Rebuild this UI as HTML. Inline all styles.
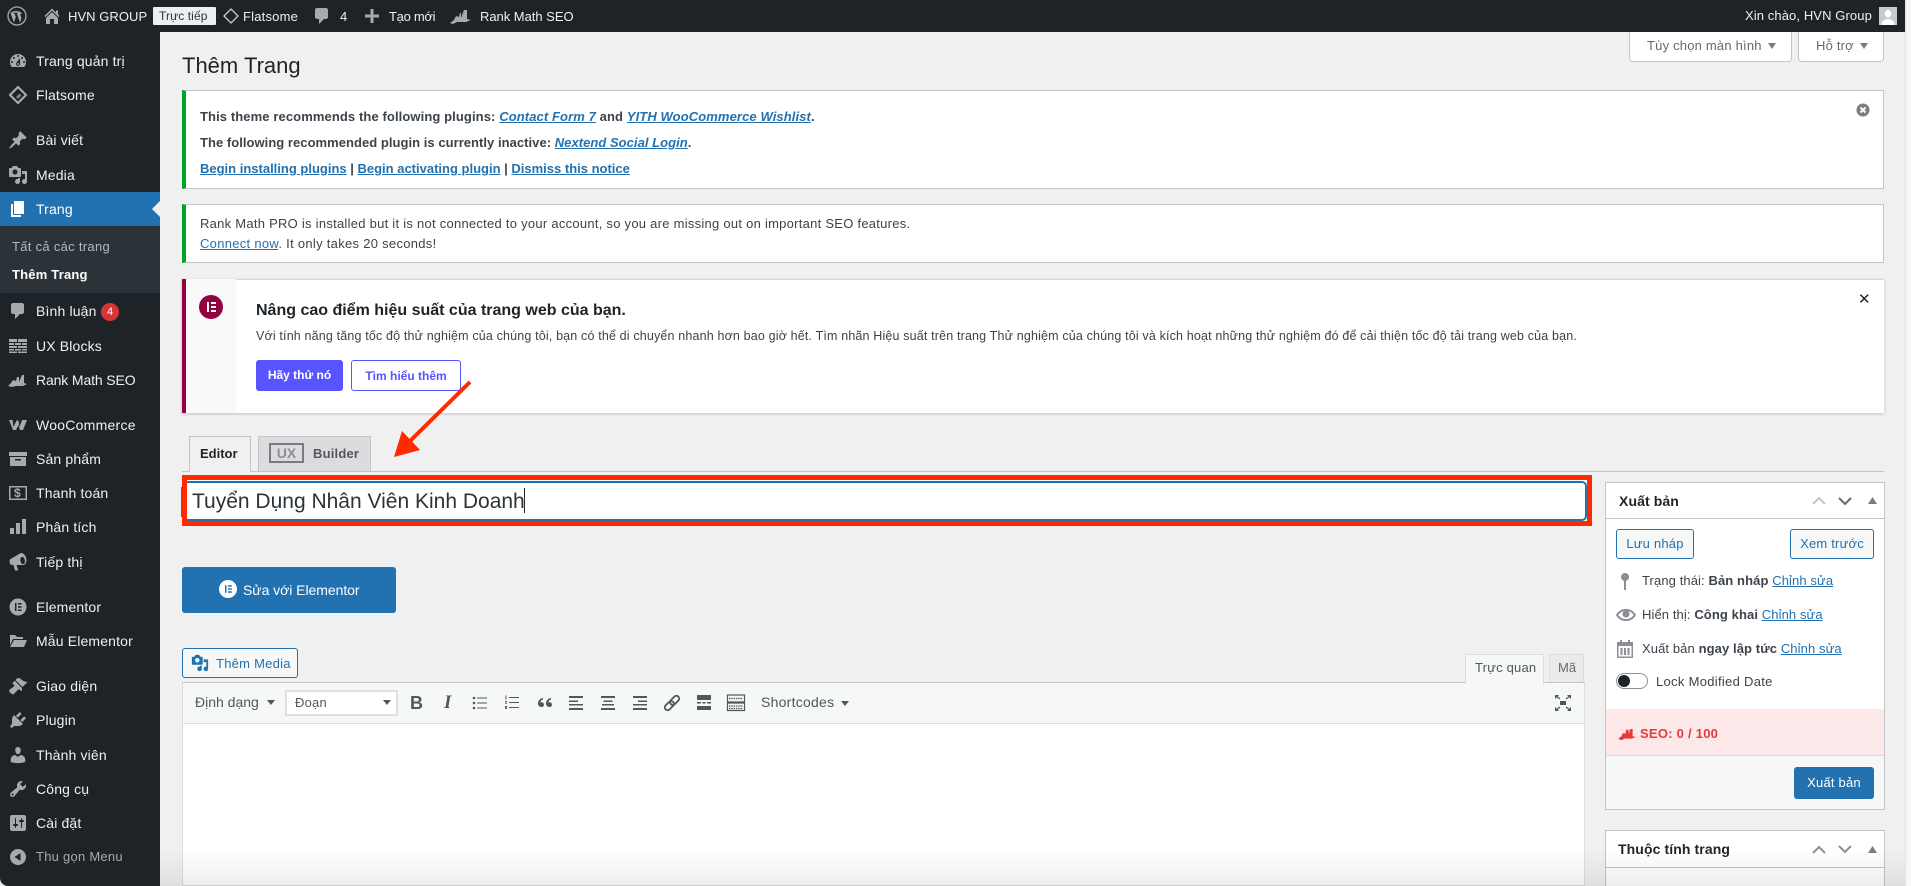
<!DOCTYPE html>
<html lang="vi"><head><meta charset="utf-8"><title>Thêm Trang</title>
<style>
*{box-sizing:border-box}
html,body{margin:0;padding:0;width:1911px;height:886px;overflow:hidden;background:#f0f0f1}
body{font-family:"Liberation Sans","Noto Sans CJK JP",sans-serif;font-size:13px;color:#3c434a;position:relative}
.t{position:absolute;white-space:nowrap;line-height:20px}
.b{position:absolute}
svg.i{position:absolute;fill:#a7aaad}
a{color:#2271b1;text-decoration:underline}
.m{color:#f0f0f1;font-size:14px;left:36px;letter-spacing:.15px}
.ab{color:#f0f0f1;font-size:13px;letter-spacing:.1px}
.btn{position:absolute;border:1px solid #2271b1;border-radius:3px;background:#f6f7f7;color:#2271b1;text-align:center}
.box{position:absolute;background:#fff;border:1px solid #c3c4c7}
.tb{position:absolute;fill:#50575e}
</style></head><body>
<!-- Admin bar -->
<div class="b" style="left:0;top:0;width:1905px;height:32px;background:#1d2327"></div>
<svg class="i" style="left:7px;top:6px" width="20" height="20" viewBox="0 0 20 20"><circle cx="10" cy="10" r="9" fill="none" stroke="#a7aaad" stroke-width="1.3"/><path d="M3.500 7l3.400 9.600 1.900-5.600-1.300-3.600-1-.1v-.7h4.400v.7l-1 .1 3.100 9.300 1-3.100c.5-1.700.3-2.700-.3-3.700-.4-.8-.7-1.400 0-2 .4-.4 1-.5 1.400-.4-2.500-2.800-8.400-3.500-11.600-.5-.2.2-.4.4-.6.6z"/></svg>
<svg class="i" style="left:42px;top:6px" width="20" height="20" viewBox="0 0 20 20"><path d="M16 8.500l1.530 1.530-1.060 1.060L10 4.620l-6.470 6.470-1.060-1.060L10 2.500l4 4v-2h2v4zm-6-2.460l6 5.990V18h-4v-5H8v5H4v-5.970z"/></svg>
<div class="t ab" style="left:68px;top:7px;letter-spacing:.05px">HVN GROUP</div>
<div class="b" style="left:153px;top:7px;width:63px;height:18px;background:#eeeeee;border-radius:1px"></div>
<div class="t" style="left:159px;top:6px;font-size:12px;color:#2c3338;letter-spacing:.1px">Trực tiếp</div>
<svg class="b" style="left:222px;top:7px" width="18" height="18" viewBox="0 0 18 18"><path d="M9 2L16 9 9 16 2 9z" fill="none" stroke="#c3c4c7" stroke-width="1.400" stroke-linejoin="round"/></svg>
<div class="t ab" style="left:243px;top:7px;letter-spacing:.2px">Flatsome</div>
<svg class="i" style="left:312px;top:6px" width="20" height="20" viewBox="0 0 20 20"><path d="M5 2h9c1.100 0 2 .9 2 2v7c0 1.100-.9 2-2 2h-2l-5 5v-5H5c-1.100 0-2-.9-2-2V4c0-1.100.9-2 2-2z"/></svg>
<div class="t ab" style="left:340px;top:7px">4</div>
<svg class="i" style="left:362px;top:6px" width="20" height="20" viewBox="0 0 20 20"><path d="M8.500 3h3v5.500H17v3h-5.500V17h-3v-5.500H3v-3h5.500z"/></svg>
<div class="t ab" style="left:389px;top:7px;letter-spacing:-.3px">Tạo mới</div>
<svg class="i" style="left:449px;top:6px" width="22" height="20" viewBox="0 0 22 20"><path d="M1 17l4-3 2-4 3 1 1-4h1v5l3-8h3v9l4 1-5 2H8l-4 2z"/></svg>
<div class="t ab" style="left:480px;top:7px;letter-spacing:-.03px">Rank Math SEO</div>
<div class="t ab" style="left:1745px;top:6px;letter-spacing:.1px">Xin chào, HVN Group</div>
<svg style="position:absolute;left:1879px;top:7px" width="18" height="18" viewBox="0 0 18 18"><rect width="18" height="18" fill="#c9c9c9"/><path d="M9 3c2.200 0 3.200 1.800 3.200 3.800S11 10.500 9 10.500 5.800 8.800 5.800 6.800 6.800 3 9 3zM2.500 18c0-4 2.800-6 6.500-6s6.500 2 6.500 6z" fill="#fff"/></svg>
<!-- scrollbar strip -->
<div class="b" style="left:1905px;top:0;width:6px;height:886px;background:#f7f7f7;border-left:1px solid #e4e4e4"></div>
<!-- Sidebar -->
<div class="b" style="left:0;top:32px;width:160px;height:854px;background:#1d2327;border-bottom-left-radius:8px"></div>
<div class="b" style="left:0;top:192px;width:160px;height:34px;background:#2271b1"></div>
<div class="b" style="left:0;top:226px;width:160px;height:67px;background:#2c3338"></div>
<svg class="b" style="left:152px;top:201px" width="8" height="16" viewBox="0 0 8 16"><path d="M8 0v16L0 8z" fill="#f0f0f1"/></svg>

<svg class="i" style="left:8px;top:51px" width="20" height="20" viewBox="0 0 20 20"><path d="M3.760 16h12.480c1.100-1.370 1.760-3.110 1.760-5 0-4.420-3.580-8-8-8s-8 3.580-8 8c0 1.890.66 3.630 1.760 5zM10 4c.55 0 1 .45 1 1s-.45 1-1 1-1-.45-1-1 .45-1 1-1zM6 6c.55 0 1 .45 1 1s-.45 1-1 1-1-.45-1-1 .45-1 1-1zm8 0c.55 0 1 .45 1 1s-.45 1-1 1-1-.45-1-1 .45-1 1-1zm-5.370 5.550L12 7v6c0 1.100-.9 2-2 2s-2-.9-2-2c0-.57.24-1.080.63-1.450zM4 10c.55 0 1 .45 1 1s-.45 1-1 1-1-.45-1-1 .45-1 1-1zm12 0c.55 0 1 .45 1 1s-.45 1-1 1-1-.45-1-1 .45-1 1-1zm-5 3c0-.55-.45-1-1-1s-1 .45-1 1 .45 1 1 1 1-.45 1-1z"/></svg>
<div class="t m" style="top:51px">Trang quản trị</div>
<svg class="b" style="left:8px;top:85px" width="20" height="20" viewBox="0 0 20 20"><path d="M10 2l8 8-8 8-8-8z" fill="none" stroke="#a7aaad" stroke-width="2.200" stroke-linejoin="round"/><path d="M10 14l3.500-3.500-2-2-3.500 3.500z" fill="#a7aaad" opacity=".7"/></svg>
<div class="t m" style="top:85px">Flatsome</div>
<svg class="i" style="left:8px;top:130px" width="20" height="20" viewBox="0 0 20 20"><path d="M10.440 3.020l1.820-1.820 6.360 6.350-1.830 1.820c-1.050-.68-2.480-.57-3.410.36l-.75.75c-.92.93-1.040 2.350-.35 3.410l-1.830 1.820-2.410-2.410-2.800 2.790c-.42.42-3.380 2.710-3.800 2.290s1.860-3.390 2.280-3.810l2.790-2.790L4.100 9.360l1.830-1.820c1.050.69 2.480.57 3.400-.36l.75-.75c.93-.92 1.050-2.350.36-3.410z"/></svg>
<div class="t m" style="top:130px">Bài viết</div>
<svg class="i" style="left:8px;top:165px" width="20" height="20" viewBox="0 0 20 20"><path d="M13 11V4c0-.55-.45-1-1-1h-1.670L9 1H5L3.670 3H2c-.55 0-1 .45-1 1v7c0 .55.45 1 1 1h10c.55 0 1-.45 1-1zM7 4.500c1.380 0 2.500 1.120 2.500 2.500S8.380 9.500 7 9.500 4.500 8.380 4.500 7 5.620 4.500 7 4.500zM14 6h5v10.500c0 1.380-1.120 2.500-2.500 2.500S14 17.880 14 16.500s1.120-2.500 2.500-2.500c.17 0 .34.02.5.05V9h-3V6zm-4 8.050V13h2v3.500c0 1.380-1.120 2.500-2.500 2.500S7 17.880 7 16.500 8.120 14 9.500 14c.17 0 .34.02.5.05z"/></svg>
<div class="t m" style="top:165px">Media</div>
<svg class="i" style="left:8px;top:199px;fill:#fff" width="20" height="20" viewBox="0 0 20 20"><path d="M6 15V2h10v13H6zm-1 1h8v2H3V5h2v11z"/></svg>
<div class="t m" style="top:199px;color:#fff">Trang</div>
<div class="t" style="left:12px;top:237px;color:#b5b8ba;font-size:13px;letter-spacing:.3px">Tất cả các trang</div>
<div class="t" style="left:12px;top:265px;color:#fff;font-size:13px;font-weight:bold;letter-spacing:.2px">Thêm Trang</div>
<svg class="i" style="left:8px;top:301px" width="20" height="20" viewBox="0 0 20 20"><path d="M5 2h9c1.100 0 2 .9 2 2v7c0 1.100-.9 2-2 2h-2l-5 5v-5H5c-1.100 0-2-.9-2-2V4c0-1.100.9-2 2-2z"/></svg>
<div class="t m" style="top:301px">Bình luận</div>
<div class="b" style="left:101px;top:303px;width:18px;height:18px;border-radius:50%;background:#d63638;color:#fff;font-size:11px;line-height:18px;text-align:center">4</div>
<svg class="i" style="left:8px;top:336px" width="20" height="20" viewBox="0 0 20 20"><path d="M1 3h8v3H1zM10 3h9v3h-9zM1 7h5v2H1zM7 7h6v2H7zM14 7h5v2h-5zM1 10h8v2H1zM10 10h9v2h-9zM1 13h5v1.500H1zM7 13h6v1.500H7zM14 13h5v1.500h-5zM1 15.500h8V17H1zM10 15.500h9V17h-9z"/></svg>
<div class="t m" style="top:336px">UX Blocks</div>
<svg class="i" style="left:8px;top:370px" width="20" height="20" viewBox="0 0 20 20"><path d="M0 16l3-3 2-3 3 1 1-4h2v5l3-7h2v8l3 1-4 2H8l-4 1z"/></svg>
<div class="t m" style="top:370px;letter-spacing:-.13px">Rank Math SEO</div>
<svg class="b" style="left:8px;top:415px" width="20" height="20" viewBox="0 0 20 20"><path d="M1 5h3.500l1 7 3-6.500h2l1 6.500 2.500-7H19l-4 10h-3l-1.500-5-2.500 5H5z" fill="#a7aaad"/></svg>
<div class="t m" style="top:415px;letter-spacing:.25px">WooCommerce</div>
<svg class="i" style="left:8px;top:449px" width="20" height="20" viewBox="0 0 20 20"><path fill-rule="evenodd" d="M1 3h18v4H1zM2 8h16v9H2zM7 10v1.500h6V10z"/></svg>
<div class="t m" style="top:449px">Sản phẩm</div>
<svg class="i" style="left:8px;top:483px" width="20" height="20" viewBox="0 0 20 20"><path fill-rule="evenodd" d="M1 3h18v14H1zM2.500 4.500v11h15v-11z"/></svg>
<div class="t" style="left:14px;top:483px;color:#a7aaad;font-size:12px;font-weight:bold">$</div>
<div class="t m" style="top:483px">Thanh toán</div>
<svg class="i" style="left:8px;top:517px" width="20" height="20" viewBox="0 0 20 20"><path d="M2 11h4v6H2zM8 6h4v11H8zM14 2h4v15h-4z"/></svg>
<div class="t m" style="top:517px">Phân tích</div>
<svg class="i" style="left:8px;top:552px" width="20" height="20" viewBox="0 0 20 20"><path d="M18.150 5.940c.46 1.620.38 3.220-.02 4.480-.42 1.280-1.260 2.180-2.300 2.480-.16.06-.26.06-.4.06-.6.02-.12.02-.18.02-.06.02-.14.02-.22.02H8.500l1.700 5.500H7l-1.500-5.500H4.250c-.5.06-1.080-.18-1.540-.62s-.88-1.080-1.060-1.880c-.24-.8-.2-1.560-.02-2.200.18-.62.58-1.080 1.060-1.300l9-5.400c.1-.06.18-.1.24-.16.06-.04.14-.08.24-.12.16-.08.28-.12.5-.18 1.040-.3 2.240.1 3.220.98s1.800 2.180 2.260 3.780zM14 5c-1.500.4-2 2.500-1.500 4.500s2 3 3 2.600c1.200-.4 1.800-2.400 1.200-4.400S15.200 4.600 14 5z" fill-rule="evenodd"/></svg>
<div class="t m" style="top:552px">Tiếp thị</div>
<svg class="i" style="left:8px;top:597px" width="20" height="20" viewBox="0 0 20 20"><path fill-rule="evenodd" d="M10 1.500a8.500 8.500 0 100 17 8.500 8.500 0 000-17zM7 6h1.500v8H7zM10 6h3.500v1.500H10zM10 9.200h3.500v1.500H10zM10 12.500h3.500V14H10z"/></svg>
<div class="t m" style="top:597px">Elementor</div>
<svg class="i" style="left:8px;top:631px" width="20" height="20" viewBox="0 0 20 20"><path d="M2 4h5l2 2h6v2H5L2 14zM6 9h13l-3 7H2z"/></svg>
<div class="t m" style="top:631px">Mẫu Elementor</div>
<svg class="i" style="left:8px;top:676px" width="20" height="20" viewBox="0 0 20 20"><path d="M14.480 11.060L7.410 3.990l1.500-1.500c.5-.56 2.300-.47 3.510.32 1.210.8 1.430 1.280 2.910 2.100 1.180.64 2.450 1.260 4.450.85zm-.71.71L6.700 4.700 4.930 6.470c-.39.39-.39 1.020 0 1.410l1.060 1.060c.39.39.39 1.030 0 1.420-.6.6-1.430 1.110-2.210 1.690-.35.26-.7.53-1.010.84C1.430 13.230 1 14.110 1.400 15.600c.04.15.11.3.2.43.84 1.270 2.500 2.290 3.600 2.290.34 0 .78-.47 1.140-.84.58-.59 1.130-1.180 1.700-1.770.71-.73 1.420-1.460 2.170-2.140.39-.39 1.030-.39 1.420 0l1.060 1.060c.39.39 1.020.39 1.410 0z"/></svg>
<div class="t m" style="top:676px">Giao diện</div>
<svg class="i" style="left:8px;top:710px" width="20" height="20" viewBox="0 0 20 20"><path d="M13.110 4.360L9.870 7.600 8 5.730l3.240-3.240c.35-.34 1.050-.2 1.560.32.52.51.66 1.210.31 1.550zm-8 1.770l.91-1.120 9.010 9.010-1.190.84c-.71.71-2.630 1.160-3.820 1.160H6.140L4.900 17.260c-.59.59-1.540.59-2.120 0-.59-.58-.59-1.530 0-2.120l1.240-1.240v-3.880c0-1.130.4-3.190 1.090-3.890zm7.260 3.970l3.240-3.240c.34-.35 1.040-.21 1.550.31.52.51.66 1.210.31 1.550l-3.240 3.250z"/></svg>
<div class="t m" style="top:710px">Plugin</div>
<svg class="i" style="left:8px;top:745px" width="20" height="20" viewBox="0 0 20 20"><path d="M10 9.250c-2.270 0-2.730-3.440-2.730-3.440C7 4.020 7.820 2 9.970 2c2.160 0 2.980 2.020 2.710 3.810 0 0-.41 3.440-2.680 3.440zm0 2.570L12.720 10c2.390 0 4.520 2.330 4.520 4.530v2.490s-3.650 1.130-7.240 1.130c-3.650 0-7.240-1.130-7.240-1.130v-2.490c0-2.250 1.940-4.480 4.470-4.480z"/></svg>
<div class="t m" style="top:745px">Thành viên</div>
<svg class="i" style="left:8px;top:779px" width="20" height="20" viewBox="0 0 20 20"><path d="M16.680 9.770c-1.340 1.340-3.300 1.670-4.950.99l-5.410 6.520c-.99.99-2.590.99-3.580 0s-.99-2.590 0-3.570l6.520-5.420c-.68-1.650-.35-3.610.99-4.950 1.280-1.280 3.120-1.620 4.720-1.060l-2.890 2.890 2.820 2.820 2.860-2.870c.53 1.580.18 3.390-1.080 4.650zM3.810 16.210c.4.39 1.040.39 1.430 0 .4-.4.4-1.040 0-1.430-.39-.4-1.030-.4-1.430 0-.39.39-.39 1.030 0 1.430z"/></svg>
<div class="t m" style="top:779px">Công cụ</div>
<svg class="i" style="left:8px;top:813px" width="20" height="20" viewBox="0 0 20 20"><path d="M18 16V4c0-1.100-.9-2-2-2H4c-1.100 0-2 .9-2 2v12c0 1.100.9 2 2 2h12c1.100 0 2-.9 2-2zM8 11h1c.55 0 1 .45 1 1s-.45 1-1 1H8v1.500c0 .28-.22.5-.5.5s-.5-.22-.5-.5V13H6c-.55 0-1-.45-1-1s.45-1 1-1h1V5.500c0-.28.22-.5.5-.5s.5.22.5.5V11zm5-2h-1c-.55 0-1-.45-1-1s.45-1 1-1h1V5.500c0-.28.22-.5.5-.5s.5.22.5.5V7h1c.55 0 1 .45 1 1s-.45 1-1 1h-1v5.500c0 .28-.22.5-.5.5s-.5-.22-.5-.5V9z"/></svg>
<div class="t m" style="top:813px">Cài đặt</div>
<svg class="i" style="left:8px;top:847px" width="20" height="20" viewBox="0 0 20 20"><path fill-rule="evenodd" d="M10 2a8 8 0 100 16 8 8 0 000-16zM12.500 6v8l-6-4z"/></svg>
<div class="t" style="left:36px;top:847px;color:#a7aaad;font-size:13px;letter-spacing:.25px">Thu gọn Menu</div>

<!-- Screen options -->
<div class="b" style="left:1629px;top:32px;width:163px;height:30px;background:#fff;border:1px solid #c3c4c7;border-top:none;border-radius:0 0 4px 4px"></div>
<div class="t" style="left:1647px;top:36px;color:#646970;letter-spacing:.2px">Tùy chọn màn hình</div>
<svg class="b" style="left:1767px;top:43px" width="10" height="6"><path d="M1 0h8L5 6z" fill="#787c82"/></svg>
<div class="b" style="left:1798px;top:32px;width:86px;height:30px;background:#fff;border:1px solid #c3c4c7;border-top:none;border-radius:0 0 4px 4px"></div>
<div class="t" style="left:1816px;top:36px;color:#646970;letter-spacing:.2px">Hỗ trợ</div>
<svg class="b" style="left:1859px;top:43px" width="10" height="6"><path d="M1 0h8L5 6z" fill="#787c82"/></svg>

<div class="t" style="left:182px;top:53px;font-size:22px;line-height:26px;color:#1d2327">Thêm Trang</div>

<!-- Notice 1 -->
<div class="box" style="left:182px;top:90px;width:1702px;height:99px;border-left:4px solid #00a32a"></div>
<div class="t" style="left:200px;top:107px;font-weight:bold;color:#3c434a;font-size:13px;letter-spacing:.1px">This theme recommends the following plugins: <a href="#" style="font-style:italic">Contact Form 7</a> and <a href="#" style="font-style:italic">YITH WooCommerce Wishlist</a>.</div>
<div class="t" style="left:200px;top:133px;font-weight:bold;color:#3c434a;font-size:13px;letter-spacing:.04px">The following recommended plugin is currently inactive: <a href="#" style="font-style:italic">Nextend Social Login</a>.</div>
<div class="t" style="left:200px;top:159px;font-weight:bold;color:#3c434a;font-size:13px"><a href="#">Begin installing plugins</a> | <a href="#">Begin activating plugin</a> | <a href="#">Dismiss this notice</a></div>
<svg class="b" style="left:1856px;top:103px" width="14" height="14" viewBox="0 0 14 14"><circle cx="7" cy="7" r="6.500" fill="#787c82"/><path d="M4.500 4.500l5 5M9.500 4.500l-5 5" stroke="#fff" stroke-width="2"/></svg>

<!-- Notice 2 -->
<div class="box" style="left:182px;top:204px;width:1702px;height:59px;border-left:4px solid #00a32a"></div>
<div class="t" style="left:200px;top:214px;letter-spacing:.26px">Rank Math PRO is installed but it is not connected to your account, so you are missing out on important SEO features.</div>
<div class="t" style="left:200px;top:234px;letter-spacing:.29px"><a href="#">Connect now</a>. It only takes 20 seconds!</div>

<!-- Notice 3 -->
<div class="b" style="left:182px;top:279px;width:1702px;height:134px;background:#fff;border-top:1px solid #d5d6d8;box-shadow:0 1px 3px rgba(0,0,0,.2)"></div>
<div class="b" style="left:182px;top:279px;width:54px;height:134px;background:#f9f9f9;border-left:4px solid #93003f"></div>
<svg class="b" style="left:199px;top:295px" width="24" height="24" viewBox="0 0 24 24"><circle cx="12" cy="12" r="12" fill="#93003f"/><path d="M8 7h2v10H8zM12 7h5v2h-5zM12 11h5v2h-5zM12 15h5v2h-5z" fill="#fff"/></svg>
<div class="t" style="left:256px;top:301px;font-size:16px;font-weight:bold;color:#1d2327">Nâng cao điểm hiệu suất của trang web của bạn.</div>
<div class="t" style="left:256px;top:326px;font-size:12.500px;color:#3c434a;letter-spacing:.16px">Với tính năng tăng tốc độ thử nghiệm của chúng tôi, bạn có thể di chuyển nhanh hơn bao giờ hết. Tìm nhãn Hiệu suất trên trang Thử nghiệm của chúng tôi và kích hoạt những thử nghiệm đó để cải thiện tốc độ tải trang web của bạn.</div>
<div class="b" style="left:256px;top:360px;width:87px;height:31px;background:#5755ff;border-radius:3px;color:#fff;font-weight:bold;font-size:12px;line-height:30px;text-align:center">Hãy thử nó</div>
<div class="b" style="left:351px;top:360px;width:110px;height:31px;background:#fff;border:1px solid #5755ff;border-radius:3px;color:#5755ff;font-weight:bold;font-size:12px;line-height:30px;text-align:center">Tìm hiểu thêm</div>
<div class="t" style="left:1858px;top:290px;font-size:15px;color:#1d2327">✕</div>

<!-- Tabs -->
<div class="b" style="left:182px;top:471px;width:1702px;height:1px;background:#c3c4c7"></div>
<div class="b" style="left:189px;top:436px;width:62px;height:36px;background:#f0f0f1;border:1px solid #c3c4c7;border-bottom:none"></div>
<div class="t" style="left:200px;top:444px;font-weight:bold;color:#1d2327">Editor</div>
<div class="b" style="left:258px;top:436px;width:113px;height:35px;background:#dcdcde;border:1px solid #c3c4c7;border-bottom:none"></div>
<div class="b" style="left:269px;top:443px;width:35px;height:20px;border:2px solid #787c82;color:#8c8f94;font-weight:bold;font-size:14px;line-height:16px;text-align:center">UX</div>
<div class="t" style="left:313px;top:444px;font-weight:bold;color:#50575e;letter-spacing:.2px">Builder</div>

<!-- Arrow -->
<svg class="b" style="left:385px;top:375px" width="95" height="90" viewBox="385 375 95 90"><path d="M470 382L407 444" stroke="#ff2a00" stroke-width="4"/><path d="M394 457L402 431 420 450z" fill="#ff2a00"/></svg>

<!-- Title -->
<div class="b" style="left:182px;top:475px;width:1410px;height:51px;border:5px solid #ff2a00;background:#fff"></div>
<div class="b" style="left:1578px;top:481px;width:9px;height:40px;border:2px solid #2271b1;border-left:none;border-radius:0 5px 5px 0;background:#fff"></div>
<div class="b" style="left:187px;top:481px;width:1391px;height:2px;background:#2271b1"></div>
<div class="b" style="left:187px;top:519px;width:1391px;height:2px;background:#2271b1"></div>
<div class="b" style="left:181px;top:487px;width:1px;height:30px;background:#2271b1"></div>
<div class="t" style="left:192px;top:487px;font-size:21px;line-height:30px;color:#2c3338">Tuyển Dụng Nhân Viên Kinh Doanh</div>
<div class="b" style="left:524px;top:488px;width:1px;height:25px;background:#1d2327"></div>

<!-- Elementor button -->
<div class="b" style="left:182px;top:567px;width:214px;height:46px;background:#2271b1;border-radius:3px"></div>
<svg class="b" style="left:219px;top:580px" width="18" height="18" viewBox="0 0 24 24"><path fill="#fff" fill-rule="evenodd" d="M12 0a12 12 0 100 24 12 12 0 000-24zM8 7h2v10H8zM12 7h5v2h-5zM12 11h5v2h-5zM12 15h5v2h-5z"/></svg>
<div class="t" style="left:243px;top:580px;font-size:14px;color:#fff;letter-spacing:-.05px">Sửa với Elementor</div>

<!-- Add Media -->
<div class="btn" style="left:182px;top:648px;width:116px;height:30px"></div>
<svg class="b" style="left:191px;top:654px" width="18" height="18" viewBox="0 0 20 20"><path fill="#2271b1" d="M13 11V4c0-.55-.45-1-1-1h-1.670L9 1H5L3.670 3H2c-.55 0-1 .45-1 1v7c0 .55.45 1 1 1h10c.55 0 1-.45 1-1zM7 4.500c1.380 0 2.500 1.120 2.500 2.500S8.380 9.500 7 9.500 4.500 8.380 4.500 7 5.620 4.500 7 4.500zM14 6h5v10.500c0 1.380-1.120 2.500-2.500 2.500S14 17.880 14 16.500s1.120-2.500 2.500-2.500c.17 0 .34.02.5.05V9h-3V6zm-4 8.050V13h2v3.500c0 1.380-1.120 2.500-2.500 2.500S7 17.880 7 16.500 8.120 14 9.500 14c.17 0 .34.02.5.05z"/></svg>
<div class="t" style="left:216px;top:654px;color:#2271b1;letter-spacing:.25px">Thêm Media</div>

<!-- Editor tabs -->
<div class="b" style="left:1465px;top:654px;width:79px;height:30px;background:#f6f7f7;border:1px solid #dcdcde;border-bottom:none;z-index:2"></div>
<div class="t" style="left:1475px;top:658px;color:#50575e;z-index:3;letter-spacing:.2px">Trực quan</div>
<div class="b" style="left:1549px;top:654px;width:35px;height:29px;background:#ebebeb;border:1px solid #dcdcde"></div>
<div class="t" style="left:1558px;top:658px;color:#646970">Mã</div>

<!-- Editor -->
<div class="b" style="left:182px;top:682px;width:1403px;height:204px;background:#fff;border:1px solid #dcdcde;border-top:1px solid #c3c4c7"></div>
<div class="b" style="left:183px;top:683px;width:1401px;height:41px;background:#f6f7f7;border-bottom:1px solid #dcdcde"></div>
<div class="t" style="left:195px;top:692px;color:#50575e;font-size:14px">Định dạng</div>
<svg class="b" style="left:267px;top:700px" width="8" height="5"><path d="M0 0h8L4 5z" fill="#50575e"/></svg>
<div class="b" style="left:285px;top:690px;width:113px;height:26px;background:#fff;border:1px solid #dcdcde;box-shadow:inset 0 0 0 1px #e4e4e4"></div>
<div class="t" style="left:295px;top:693px;color:#50575e;letter-spacing:.2px">Đoạn</div>
<svg class="b" style="left:383px;top:700px" width="8" height="5"><path d="M0 0h8L4 5z" fill="#50575e"/></svg>
<div class="t" style="left:410px;top:693px;font-size:18px;font-weight:bold;color:#50575e">B</div>
<div class="t" style="left:444px;top:693px;font-size:19px;font-weight:bold;font-style:italic;color:#50575e;font-family:'Liberation Serif',serif">I</div>
<svg class="tb" style="left:470px;top:694px" width="20" height="20" viewBox="0 0 20 20"><circle cx="4" cy="4" r="1.300"/><circle cx="4" cy="9" r="1.300"/><circle cx="4" cy="14" r="1.300"/><path d="M7 3.500h10v1H7zM7 8.500h10v1H7zM7 13.500h10v1H7z"/></svg>
<svg class="tb" style="left:502px;top:694px" width="20" height="20" viewBox="0 0 20 20"><path d="M3.500 1.500h1v4h-1zM3 7h2v1H3v.7h2v1H3zM3 12h2v3H3v-.7h1v-.5H3zM7 3h10v1H7zM7 8h10v1H7zM7 13h10v1H7z"/></svg>
<svg class="tb" style="left:534px;top:693px" width="20" height="20" viewBox="0 0 20 20"><path d="M9 5v1.500c-2 .5-2.500 2-2.500 3 .3-.2.7-.3 1-.3 1.400 0 2.500 1 2.500 2.400S8.900 14 7.400 14C5.400 14 4 12.500 4 10.500 4 7.500 6 5.500 9 5zM17 5v1.500c-2 .5-2.500 2-2.500 3 .3-.2.7-.3 1-.3 1.400 0 2.500 1 2.500 2.400s-1.100 2.400-2.600 2.400c-2 0-3.400-1.500-3.400-3.500 0-3 2-5 5-5.500z"/></svg>
<svg class="tb" style="left:566px;top:693px" width="20" height="20" viewBox="0 0 20 20"><path d="M3 3h14v2H3zM3 7.500h9v1.500H3zM3 11h14v1.500H3zM3 15h14v2H3z"/></svg>
<svg class="tb" style="left:598px;top:693px" width="20" height="20" viewBox="0 0 20 20"><path d="M3 3h14v2H3zM5.500 7.500h9v1.500h-9zM4 11h12v1.500H4zM3 15h14v2H3z"/></svg>
<svg class="tb" style="left:630px;top:693px" width="20" height="20" viewBox="0 0 20 20"><path d="M3 3h14v2H3zM8 7.500h9v1.500H8zM3 11h14v1.500H3zM3 15h14v2H3z"/></svg>
<svg class="b" style="left:662px;top:693px" width="20" height="20" viewBox="0 0 20 20" fill="none" stroke="#50575e" stroke-width="1.800"><g transform="rotate(-45 10 10)"><rect x="1" y="7.200" width="10.500" height="5.600" rx="2.800"/><rect x="8.500" y="7.200" width="10.500" height="5.600" rx="2.800"/></g></svg>
<svg class="tb" style="left:694px;top:693px" width="20" height="20" viewBox="0 0 20 20"><path d="M3 2h14v5H3zM3 9h4v1.500H3zM8.500 9h3v1.500h-3zM13 9h4v1.500h-4zM3 13h14v4H3z"/></svg>
<svg class="b" style="left:726px;top:693px" width="20" height="20" viewBox="0 0 20 20" fill="none" stroke="#50575e" stroke-width="1.200"><rect x="1.500" y="2" width="17" height="7"/><rect x="1.500" y="10" width="17" height="7.500"/><path d="M3 5.500h14M3 13h14M3 15.500h14" stroke-dasharray="1.500 .8" stroke-width="1.300"/></svg>
<div class="t" style="left:761px;top:692px;color:#50575e;font-size:14px;letter-spacing:.25px">Shortcodes</div>
<svg class="b" style="left:841px;top:701px" width="8" height="5"><path d="M0 0h8L4 5z" fill="#50575e"/></svg>
<svg class="b" style="left:1555px;top:695px" width="16" height="16" viewBox="0 0 16 16"><path d="M5 6h6v4H5z" fill="#50575e"/><path d="M1 1l4 3M15 1l-4 3M1 15l4-3M15 15l-4-3" stroke="#50575e" stroke-width="1.300"/><path d="M0 0h4L0 4zM16 0h-4l4 4zM0 16h4l-4-4zM16 16h-4l4-4z" fill="#50575e"/></svg>

<!-- Publish box -->
<div class="box" style="left:1605px;top:482px;width:280px;height:328px"></div>
<div class="b" style="left:1606px;top:518px;width:278px;height:1px;background:#c3c4c7"></div>
<div class="t" style="left:1619px;top:491px;font-size:14px;font-weight:bold;color:#1d2327;letter-spacing:.1px">Xuất bản</div>
<svg class="b" style="left:1812px;top:496px" width="14" height="9" viewBox="0 0 14 9" fill="none" stroke="#c3c4c7" stroke-width="2"><path d="M1 8l6-6 6 6"/></svg>
<svg class="b" style="left:1838px;top:497px" width="14" height="9" viewBox="0 0 14 9" fill="none" stroke="#646970" stroke-width="2"><path d="M1 1l6 6 6-6"/></svg>
<svg class="b" style="left:1868px;top:497px" width="9" height="7"><path d="M4.500 0L9 7H0z" fill="#787c82"/></svg>
<div class="btn" style="left:1616px;top:529px;width:78px;height:30px;line-height:28px;letter-spacing:.2px">Lưu nháp</div>
<div class="btn" style="left:1790px;top:529px;width:84px;height:30px;line-height:28px;letter-spacing:.2px">Xem trước</div>
<svg class="b" style="left:1620px;top:572px" width="10" height="18" viewBox="0 0 10 18"><circle cx="5" cy="5" r="4" fill="#8c8f94"/><path d="M4 8h2v10H4z" fill="#8c8f94"/></svg>
<div class="t" style="left:1642px;top:571px;letter-spacing:.1px">Trạng thái: <b>Bản nháp</b> <a href="#">Chỉnh sửa</a></div>
<svg class="i" style="left:1616px;top:605px;fill:#8c8f94" width="20" height="20" viewBox="0 0 20 20"><path d="M19.700 9.400C17.700 6 14 3.900 10 3.900S2.300 6 .3 9.400L0 10l.3.6c2 3.400 5.700 5.500 9.700 5.500s7.700-2.100 9.700-5.500l.3-.6-.3-.6zM10 14.100c-3.100 0-6-1.600-7.700-4.100C3.600 8 5.700 6.600 8 6.100c-.9.6-1.500 1.700-1.500 2.900 0 1.900 1.600 3.500 3.500 3.500s3.500-1.600 3.500-3.500c0-1.200-.6-2.300-1.500-2.900 2.300.5 4.400 1.900 5.700 3.900-1.700 2.500-4.600 4.100-7.700 4.100z"/></svg>
<div class="t" style="left:1642px;top:605px;letter-spacing:.1px">Hiển thị: <b>Công khai</b> <a href="#">Chỉnh sửa</a></div>
<svg class="b" style="left:1617px;top:640px" width="16" height="18" viewBox="0 0 16 18" fill="#8c8f94"><path d="M3 0h2v3H3zM11 0h2v3h-2z"/><path fill-rule="evenodd" d="M0 2h16v16H0zM1.500 6v10.500h13V6z"/><path d="M3.500 8H5.500v7h-2zM7 8h2v7H7zM10.500 8h2v7h-2z"/></svg>
<div class="t" style="left:1642px;top:639px;letter-spacing:.1px">Xuất bản <b>ngay lập tức</b> <a href="#">Chỉnh sửa</a></div>
<div class="b" style="left:1616px;top:673px;width:32px;height:16px;border:1px solid #8c8f94;border-radius:8px;background:#fff"></div>
<div class="b" style="left:1618px;top:675px;width:12px;height:12px;border-radius:50%;background:#1d2327"></div>
<div class="t" style="left:1656px;top:672px;letter-spacing:.3px">Lock Modified Date</div>
<div class="b" style="left:1606px;top:709px;width:278px;height:47px;background:#fce8e8;border-bottom:1px solid #dcdcde"></div>
<svg class="b" style="left:1618px;top:725px" width="18" height="16" viewBox="0 0 22 20"><path fill="#e53a3a" d="M0 17l4-3 2-4 3 1 1-5h3v5l2-6h3v9l4 1-5 2H8l-4 2z"/></svg>
<div class="t" style="left:1640px;top:724px;color:#e53a3a;font-weight:bold;letter-spacing:.25px">SEO: 0 / 100</div>
<div class="b" style="left:1606px;top:756px;width:278px;height:53px;background:#f6f7f7"></div>
<div class="b" style="left:1794px;top:767px;width:80px;height:32px;background:#2271b1;border-radius:3px;color:#fff;line-height:31px;text-align:center;letter-spacing:.2px">Xuất bản</div>

<!-- Page attributes -->
<div class="box" style="left:1605px;top:830px;width:280px;height:70px"></div>
<div class="b" style="left:1606px;top:867px;width:278px;height:1px;background:#c3c4c7"></div>
<div class="t" style="left:1618px;top:839px;font-size:14px;font-weight:bold;color:#1d2327;letter-spacing:.1px">Thuộc tính trang</div>
<svg class="b" style="left:1812px;top:845px" width="14" height="9" viewBox="0 0 14 9" fill="none" stroke="#8c8f94" stroke-width="2"><path d="M1 8l6-6 6 6"/></svg>
<svg class="b" style="left:1838px;top:845px" width="14" height="9" viewBox="0 0 14 9" fill="none" stroke="#8c8f94" stroke-width="2"><path d="M1 1l6 6 6-6"/></svg>
<svg class="b" style="left:1868px;top:846px" width="9" height="7"><path d="M4.500 0L9 7H0z" fill="#787c82"/></svg>

<!-- Bottom fade -->
<div class="b" style="left:160px;top:850px;width:1745px;height:36px;background:linear-gradient(rgba(0,0,0,0),rgba(0,0,0,.07));z-index:9"></div>
</body></html>
